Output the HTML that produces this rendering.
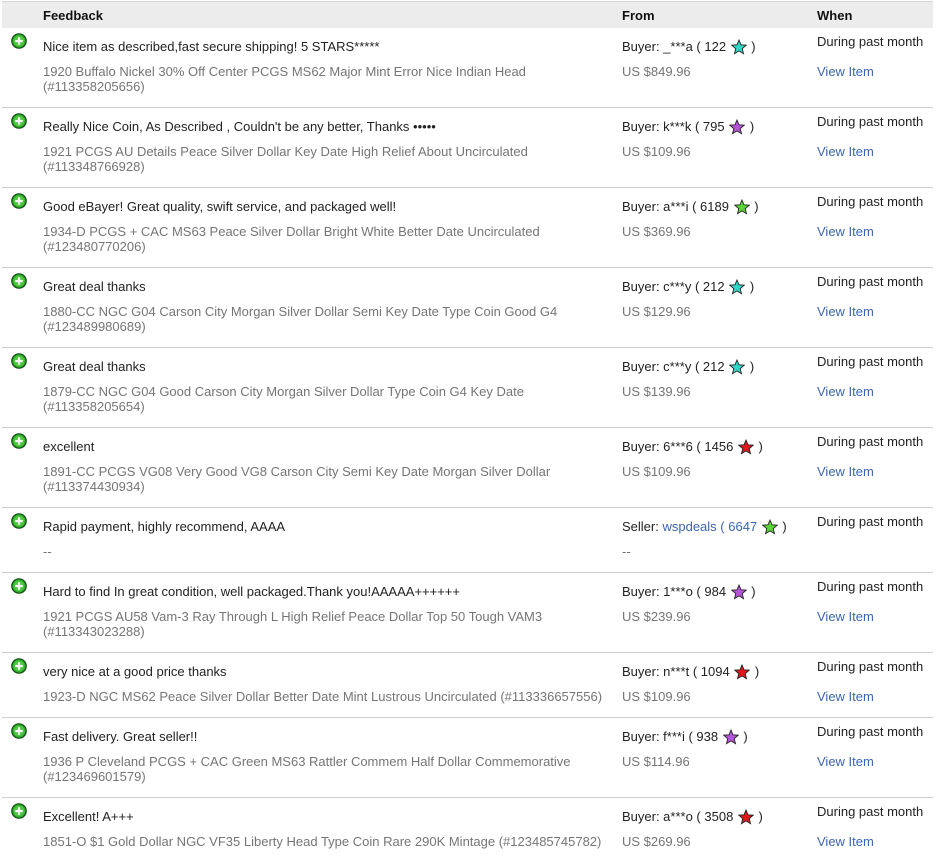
<!DOCTYPE html>
<html><head><meta charset="utf-8">
<style>
*{margin:0;padding:0;box-sizing:border-box}
body{width:941px;height:856px;background:#fff;font-family:"Liberation Sans",Arial,sans-serif;font-size:13px;color:#222;position:relative;overflow:hidden}
.hdr{position:absolute;left:2px;top:1px;width:931px;height:27px;background:#ececec;border-top:1px solid #d6d6d6;font-weight:bold;font-size:13px;color:#111}
.hdr span{position:absolute;top:6px}
.row{position:absolute;left:2px;width:931px;border-top:1px solid #cfcfcf}
.row>div,.row>svg{position:absolute;white-space:nowrap;line-height:15px}
.ic{left:9px;top:5px}
.c{left:41px;top:11px}
.d{left:41px;top:36px;color:#757575}
.f{left:620px;top:11px;height:15px}
.p{left:620px;top:36px;color:#757575}
.w{left:815px;top:6px}
.v{left:815px;top:36px;color:#3a66b0}
.st{position:static;display:inline-block;vertical-align:-4px;margin:0 1px 0 1px}
a{color:#3a66b0;text-decoration:none}
</style></head><body>
<svg width="0" height="0" style="position:absolute">
<defs>
<symbol id="plus" viewBox="0 0 16 16"><circle cx="8" cy="8" r="7.2" fill="#2fa82f" stroke="#0d4d0d" stroke-width="1.2"/><circle cx="8" cy="8" r="5.5" fill="#49c83c"/><path d="M8 4.3v7.4M4.3 8h7.4" stroke="#fff" stroke-width="2.2"/></symbol>
<symbol id="star" viewBox="0 0 16 16"><path d="M8 1l2 4.8 5.2.4-4 3.4 1.3 5.1L8 11.9l-4.5 2.8 1.3-5.1-4-3.4 5.2-.4z" stroke="#222" stroke-width=".9"/></symbol>
</defs></svg>

<div class="hdr"><span style="left:41px">Feedback</span><span style="left:620px">From</span><span style="left:815px">When</span></div>

<div class="row" style="top:28px;height:80px;border-top:none">
<svg class="ic" width="16" height="16"><use href="#plus"/></svg>
<div class="c">Nice item as described,fast secure shipping! 5 STARS*****</div>
<div class="d">1920 Buffalo Nickel 30% Off Center PCGS MS62 Major Mint Error Nice Indian Head<br>(#113358205656)</div>
<div class="f">Buyer: _***a ( 122 <svg class="st" width="16" height="16" fill="#33d6c8"><use href="#star"/></svg> )</div>
<div class="p">US $849.96</div><div class="w">During past month</div><div class="v">View Item</div></div>

<div class="row" style="top:107px;height:80px">
<svg class="ic" width="16" height="16"><use href="#plus"/></svg>
<div class="c">Really Nice Coin, As Described , Couldn't be any better, Thanks •••••</div>
<div class="d">1921 PCGS AU Details Peace Silver Dollar Key Date High Relief About Uncirculated<br>(#113348766928)</div>
<div class="f">Buyer: k***k ( 795 <svg class="st" width="16" height="16" fill="#b455d8"><use href="#star"/></svg> )</div>
<div class="p">US $109.96</div><div class="w">During past month</div><div class="v">View Item</div></div>

<div class="row" style="top:187px;height:80px">
<svg class="ic" width="16" height="16"><use href="#plus"/></svg>
<div class="c">Good eBayer! Great quality, swift service, and packaged well!</div>
<div class="d">1934-D PCGS + CAC MS63 Peace Silver Dollar Bright White Better Date Uncirculated<br>(#123480770206)</div>
<div class="f">Buyer: a***i ( 6189 <svg class="st" width="16" height="16" fill="#5cd43a"><use href="#star"/></svg> )</div>
<div class="p">US $369.96</div><div class="w">During past month</div><div class="v">View Item</div></div>

<div class="row" style="top:267px;height:80px">
<svg class="ic" width="16" height="16"><use href="#plus"/></svg>
<div class="c">Great deal thanks</div>
<div class="d">1880-CC NGC G04 Carson City Morgan Silver Dollar Semi Key Date Type Coin Good G4<br>(#123489980689)</div>
<div class="f">Buyer: c***y ( 212 <svg class="st" width="16" height="16" fill="#33d6c8"><use href="#star"/></svg> )</div>
<div class="p">US $129.96</div><div class="w">During past month</div><div class="v">View Item</div></div>

<div class="row" style="top:347px;height:80px">
<svg class="ic" width="16" height="16"><use href="#plus"/></svg>
<div class="c">Great deal thanks</div>
<div class="d">1879-CC NGC G04 Good Carson City Morgan Silver Dollar Type Coin G4 Key Date<br>(#113358205654)</div>
<div class="f">Buyer: c***y ( 212 <svg class="st" width="16" height="16" fill="#33d6c8"><use href="#star"/></svg> )</div>
<div class="p">US $139.96</div><div class="w">During past month</div><div class="v">View Item</div></div>

<div class="row" style="top:427px;height:80px">
<svg class="ic" width="16" height="16"><use href="#plus"/></svg>
<div class="c">excellent</div>
<div class="d">1891-CC PCGS VG08 Very Good VG8 Carson City Semi Key Date Morgan Silver Dollar<br>(#113374430934)</div>
<div class="f">Buyer: 6***6 ( 1456 <svg class="st" width="16" height="16" fill="#e0181c"><use href="#star"/></svg> )</div>
<div class="p">US $109.96</div><div class="w">During past month</div><div class="v">View Item</div></div>

<div class="row" style="top:507px;height:65px">
<svg class="ic" width="16" height="16"><use href="#plus"/></svg>
<div class="c">Rapid payment, highly recommend, AAAA</div>
<div class="d">--</div>
<div class="f">Seller: <a>wspdeals</a> <a>( 6647</a> <svg class="st" width="16" height="16" fill="#5cd43a"><use href="#star"/></svg> )</div>
<div class="p">--</div><div class="w">During past month</div></div>

<div class="row" style="top:572px;height:80px">
<svg class="ic" width="16" height="16"><use href="#plus"/></svg>
<div class="c">Hard to find In great condition, well packaged.Thank you!AAAAA++++++</div>
<div class="d">1921 PCGS AU58 Vam-3 Ray Through L High Relief Peace Dollar Top 50 Tough VAM3<br>(#113343023288)</div>
<div class="f">Buyer: 1***o ( 984 <svg class="st" width="16" height="16" fill="#b455d8"><use href="#star"/></svg> )</div>
<div class="p">US $239.96</div><div class="w">During past month</div><div class="v">View Item</div></div>

<div class="row" style="top:652px;height:65px">
<svg class="ic" width="16" height="16"><use href="#plus"/></svg>
<div class="c">very nice at a good price thanks</div>
<div class="d">1923-D NGC MS62 Peace Silver Dollar Better Date Mint Lustrous Uncirculated (#113336657556)</div>
<div class="f">Buyer: n***t ( 1094 <svg class="st" width="16" height="16" fill="#e0181c"><use href="#star"/></svg> )</div>
<div class="p">US $109.96</div><div class="w">During past month</div><div class="v">View Item</div></div>

<div class="row" style="top:717px;height:80px">
<svg class="ic" width="16" height="16"><use href="#plus"/></svg>
<div class="c">Fast delivery. Great seller!!</div>
<div class="d">1936 P Cleveland PCGS + CAC Green MS63 Rattler Commem Half Dollar Commemorative<br>(#123469601579)</div>
<div class="f">Buyer: f***i ( 938 <svg class="st" width="16" height="16" fill="#b455d8"><use href="#star"/></svg> )</div>
<div class="p">US $114.96</div><div class="w">During past month</div><div class="v">View Item</div></div>

<div class="row" style="top:797px;height:60px">
<svg class="ic" width="16" height="16"><use href="#plus"/></svg>
<div class="c">Excellent! A+++</div>
<div class="d">1851-O $1 Gold Dollar NGC VF35 Liberty Head Type Coin Rare 290K Mintage (#123485745782)</div>
<div class="f">Buyer: a***o ( 3508 <svg class="st" width="16" height="16" fill="#e0181c"><use href="#star"/></svg> )</div>
<div class="p">US $269.96</div><div class="w">During past month</div><div class="v">View Item</div></div>
</body></html>
